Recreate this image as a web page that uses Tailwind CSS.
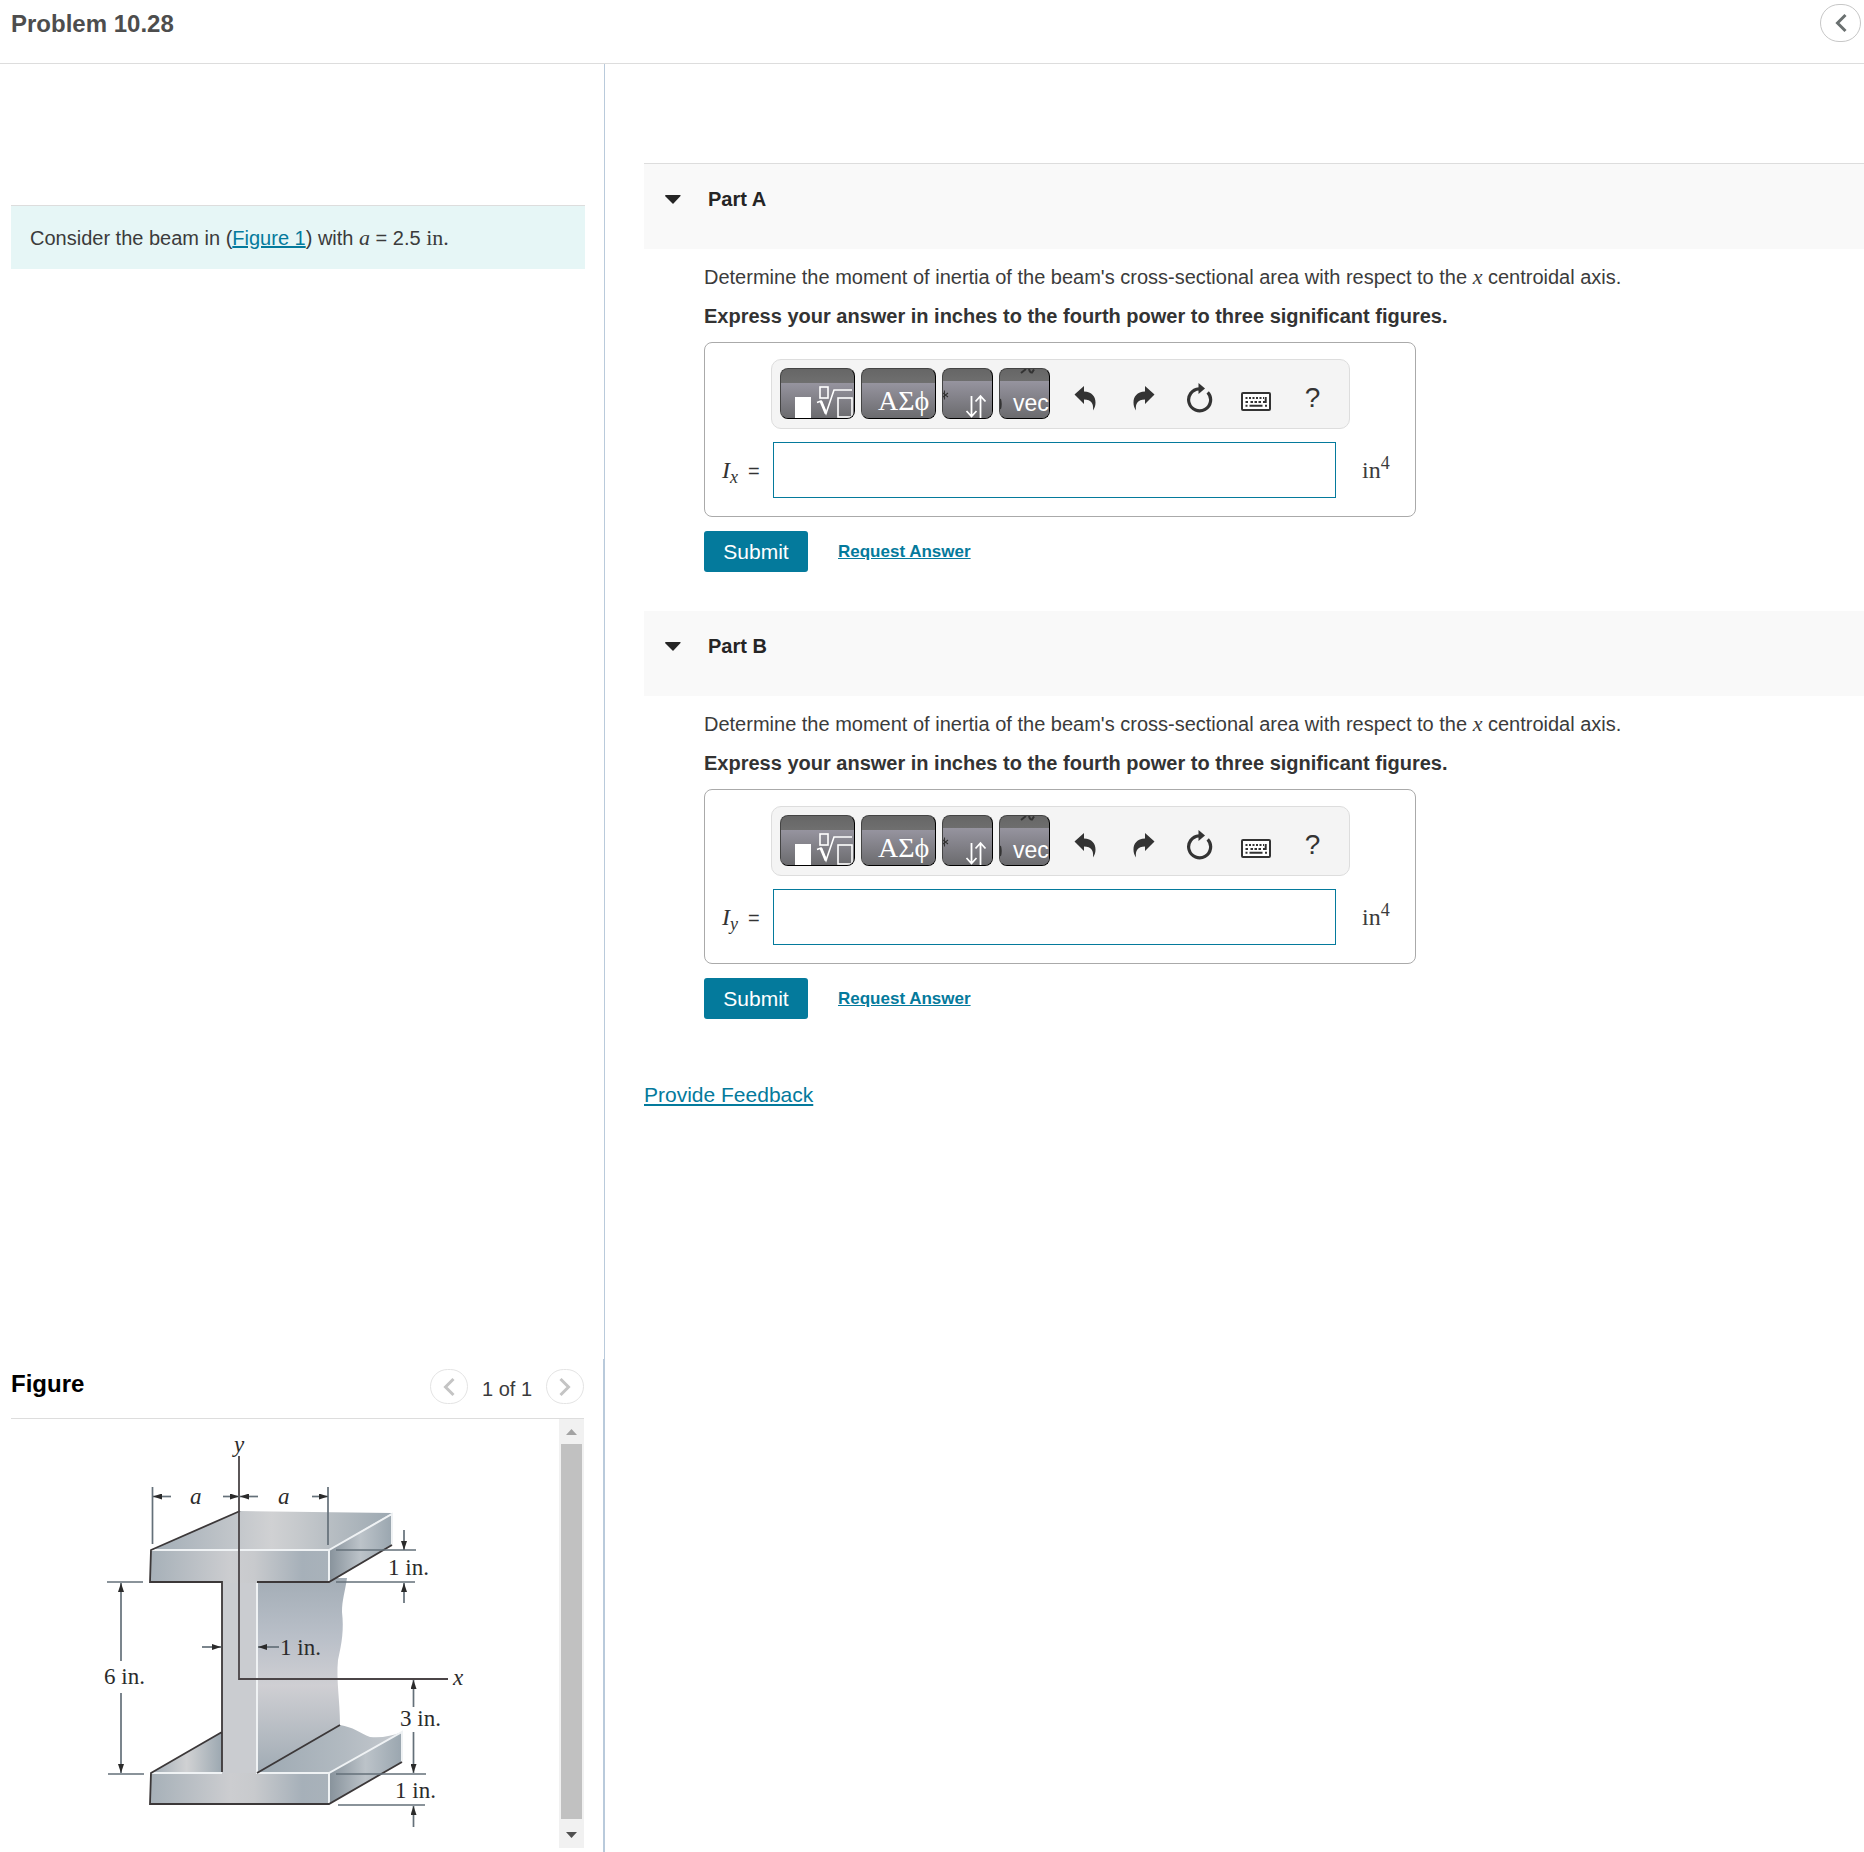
<!DOCTYPE html>
<html lang="en">
  <head>
    <meta charset="UTF-8" />
    <meta name="viewport" content="width=device-width, initial-scale=1.0" />
    <title>Problem 10.28</title>
    <script src="https://cdn.jsdelivr.net/npm/@tailwindcss/browser@4"></script>
  </head>

  <body class="bg-white text-[#3b3b3b] font-['Liberation_Sans',Arial,sans-serif]">
    <!-- Shared icons -->
    <svg class="hidden">
      <symbol id="icon-templates" viewBox="0 0 73 49">
        <rect x="14" y="28" width="16" height="21" fill="#fff" />
        <rect x="39" y="18" width="8" height="11" fill="none" stroke="#fff" stroke-width="1.6" />
        <path d="M36 33.500l4-1.500 5 12.500L53 21h18" fill="none" stroke="#fff" stroke-width="1.6" />
        <path d="M40 32.500l5 12" stroke="#fff" stroke-width="2.8" />
        <rect x="57" y="29" width="14" height="19" fill="none" stroke="#fff" stroke-width="1.6" />
      </symbol>
      <symbol id="icon-arrows" viewBox="0 0 49 49">
        <path d="M28.500 27v20M23.500 42l5 5.500 5-5.500M37.500 49V27M32.500 32.500l5-5.500 5 5.500" fill="none" stroke="#fff" stroke-width="1.8" />
        <path d="M1.500 21.500v9M0 24l5 4M0 28l5-4" stroke="#333" stroke-width="1.1" />
      </symbol>
      <symbol id="icon-undo" viewBox="0 0 24 28">
        <path d="M1.500 10.500L11 2v5.500c8 .5 11.500 5 11.500 11 0 3-.8 5.500-2.500 8 .7-7-1.500-11-9-11V20z" fill="#333" />
      </symbol>
      <symbol id="icon-reset" viewBox="0 0 28 30">
        <path d="M22.700 9.300A11 11 0 1 1 14 5.800" fill="none" stroke="#333" stroke-width="3.200" />
        <path d="M13.500 0l6.500 5.500-6.500 5.500z" fill="#333" />
      </symbol>
      <symbol id="icon-keyboard" viewBox="0 0 30 19">
        <rect x="1" y="1" width="28" height="17" rx="1" fill="#fff" stroke="#333" stroke-width="2" />
        <path d="M4.500 6H23M4.500 13.800H7M24 13.800H26" stroke="#333" stroke-width="2" stroke-dasharray="2 1.500" />
        <path d="M4.500 10h3.500M9.500 10H21" stroke="#333" stroke-width="2" stroke-dasharray="2.500 1.500" />
        <path d="M8.500 13.800H21.500M22 10h2.700V5" fill="none" stroke="#333" stroke-width="2" />
      </symbol>
      <symbol id="icon-chevron" viewBox="0 0 12 20">
        <path d="M10.500 2L2.500 10l8 8" fill="none" stroke="currentColor" stroke-width="3" />
      </symbol>
    </svg>

    <div class="min-h-screen flex flex-col">
      <!-- Header -->
      <header class="h-16 flex items-start justify-between border-b border-[#ddd] pl-[11px] pr-[3px]">
        <h1 class="mt-2.5 text-[24px] leading-7 font-bold text-[#4d4d4d]">Problem 10.28</h1>
        <button type="button" aria-label="Collapse" class="mt-1 w-[41px] h-[38px] rounded-full border border-[#c7c7c7] flex items-center justify-center text-[#6a7070]">
          <svg class="w-3 h-5"><use href="#icon-chevron" /></svg>
        </button>
      </header>

      <main class="grow flex">
        <!-- Left column -->
        <section class="w-[605px] shrink-0 flex flex-col">
          <div class="grow border-r border-[#b9cadb] pt-[141px] pl-[11px] pr-[19px]">
            <div class="border-t border-[#ddd] bg-[#e6f6f6] h-16 flex items-center pl-[19px]">
              <p class="text-[20px] leading-6">
                Consider the beam in (<a href="#figure" class="text-[#047a9c] underline">Figure 1</a>) with
                <i class="font-['Liberation_Serif',serif] text-[22px]">a</i> = 2.5
                <span class="font-['Liberation_Serif',serif] text-[22px]">in.</span>
              </p>
            </div>
          </div>

          <!-- Figure viewer -->
          <div id="figure" class="border-r-2 border-[#b9cadb] pl-[11px] pr-[19px] pb-1">
            <div class="h-[60px] flex items-start justify-between border-b border-[#ddd]">
              <h2 class="mt-[11px] text-[24px] leading-7 font-bold text-black">Figure</h2>
              <div class="mt-2.5 flex items-center">
                <button type="button" aria-label="Previous figure" class="w-[38px] h-[35px] rounded-full border border-[#e4e4e4] flex items-center justify-center text-[#c4c4c4]">
                  <svg class="w-3 h-5"><use href="#icon-chevron" /></svg>
                </button>
                <span class="w-[78px] pt-1 text-center text-[20px] leading-6">1 of 1</span>
                <button type="button" aria-label="Next figure" class="w-[38px] h-[35px] rounded-full border border-[#e4e4e4] flex items-center justify-center text-[#c4c4c4]">
                  <svg class="w-3 h-5 rotate-180"><use href="#icon-chevron" /></svg>
                </button>
              </div>
            </div>
            <div class="flex">
              <svg class="w-[548px] h-[429px]" viewBox="11 1419 548 429" font-family="Liberation Serif, serif" font-size="23" fill="#2b2b2b">
                <defs>
                  <linearGradient id="front">
                    <stop offset="0" stop-color="#a6b0b8" />
                    <stop offset=".45" stop-color="#cccdd0" />
                    <stop offset=".58" stop-color="#c8cacd" />
                    <stop offset=".85" stop-color="#a6b0b9" />
                    <stop offset="1" stop-color="#a9b2ba" />
                  </linearGradient>
                  <linearGradient id="top">
                    <stop offset="0" stop-color="#a2adb6" />
                    <stop offset=".5" stop-color="#d0d1d3" />
                    <stop offset=".6" stop-color="#c7cacd" />
                    <stop offset="1" stop-color="#9ca8b1" />
                  </linearGradient>
                  <linearGradient id="side">
                    <stop offset="0" stop-color="#87929b" />
                    <stop offset=".5" stop-color="#bcc3c9" />
                    <stop offset="1" stop-color="#9aa6af" />
                  </linearGradient>
                  <linearGradient id="web" x1="0" y1="0" x2="0" y2="1">
                    <stop offset="0" stop-color="#a3adb6" />
                    <stop offset=".3" stop-color="#b9bfc8" />
                    <stop offset=".55" stop-color="#cfcfd3" />
                    <stop offset="1" stop-color="#a0abb4" />
                  </linearGradient>
                  <linearGradient id="lower">
                    <stop offset="0" stop-color="#9da9b2" />
                    <stop offset=".6" stop-color="#b2bac1" />
                    <stop offset="1" stop-color="#c6cacf" />
                  </linearGradient>
                  <marker id="arrow" viewBox="0 0 9 6" refX="9" refY="3" markerWidth="9" markerHeight="6" markerUnits="userSpaceOnUse" orient="auto">
                    <path d="M0 0l9 3-9 3z" fill="#2b2b2b" />
                  </marker>
                </defs>

                <!-- Web side face and lower flange -->
                <path d="M257 1578H347C345 1592 342 1600 342 1612C344 1630 342 1642 338 1660C336 1680 340 1700 340 1725L257 1773z" fill="url(#web)" />
                <path d="M257 1773L340 1725C353 1727 360 1733 370 1737C382 1738 392 1736 402 1732L329 1773z" fill="url(#lower)" />
                <path d="M151 1773L222 1732V1773z" fill="url(#top)" />
                <path d="M329 1773L402 1732V1762L329 1804z" fill="url(#side)" />

                <!-- Upper flange -->
                <path d="M151 1550L240 1511L392 1513L329 1550z" fill="url(#top)" />
                <path d="M329 1550L392 1513V1545L329 1582z" fill="url(#side)" />

                <!-- Front face -->
                <path d="M151 1550H329V1582H257V1773H329V1804H150L151 1773H222V1582H150z" fill="url(#front)" />
                <path d="M222 1583H257V1773H222z" fill="#caccd0" />

                <!-- Highlights -->
                <g fill="none" stroke="#eff2f4" stroke-width="2">
                  <path d="M151 1550H329L392 1514V1545M329 1550V1582M257 1583V1773H329L402 1732V1762M329 1773V1804M151 1773H222" />
                </g>
                <!-- Dark edges -->
                <g fill="none" stroke="#3c3839" stroke-width="1.8">
                  <path d="M240 1511L151 1550L150 1582H222V1772M257 1582H329L392 1545M222 1732L151 1773L150 1804H329L402 1762M257 1773L340 1725" />
                </g>
                <!-- Axes -->
                <path d="M239 1456V1679H448" fill="none" stroke="#4b4547" stroke-width="1.8" />

                <!-- Dimension lines -->
                <g fill="none" stroke="#647079" stroke-width="1.7">
                  <path d="M152.500 1487V1544M328 1487V1545M107 1582H143M108 1774H144M336 1550H416M336 1582H415M336 1774H426M338 1805H425" />
                  <g marker-end="url(#arrow)">
                    <path d="M171 1496.500H153" />
                    <path d="M223 1496.500H239" />
                    <path d="M258 1496.500H240" />
                    <path d="M312 1496.500H328" />
                    <path d="M121 1661V1583" />
                    <path d="M121 1693V1773" />
                    <path d="M404 1530V1550" />
                    <path d="M404 1603V1583" />
                    <path d="M202 1647H221" />
                    <path d="M279 1647H258" />
                    <path d="M413.500 1707V1680" />
                    <path d="M413.500 1732V1773" />
                    <path d="M413.500 1827V1806" />
                  </g>
                </g>

                <g font-style="italic">
                  <text x="234" y="1452">y</text>
                  <text x="190" y="1504">a</text>
                  <text x="278" y="1504">a</text>
                  <text x="453" y="1685">x</text>
                </g>
                <text x="388" y="1575">1 in.</text>
                <text x="280" y="1655">1 in.</text>
                <text x="104" y="1684">6 in.</text>
                <text x="400" y="1726">3 in.</text>
                <text x="395" y="1798">1 in.</text>
              </svg>
              <!-- Scrollbar -->
              <div class="grow bg-[#f1f1f1] px-0.5 flex flex-col items-center">
                <svg class="h-[25px] w-[11px]" viewBox="0 0 11 25"><path d="M0 16l5.500-6 5.500 6z" fill="#a3a3a3" /></svg>
                <div class="grow w-full bg-[#c1c1c1]"></div>
                <svg class="h-[29px] w-[11px]" viewBox="0 0 11 29"><path d="M0 13l5.500 6 5.500-6z" fill="#505050" /></svg>
              </div>
            </div>
          </div>
        </section>

        <!-- Right column -->
        <section class="grow pt-[99px] pl-[39px]">
          <!-- Part A -->
          <div class="h-[86px] border-t border-[#ddd] bg-[#f9f9f9] flex items-start pt-[23px] pl-[21px]">
            <button type="button" aria-label="Toggle Part A" class="w-[43px] h-6 flex items-center">
              <svg class="w-4 h-[9px]" viewBox="0 0 16 9"><path d="M0 1Q0 0 1 0H15Q16 0 15.500 1L8.500 8.500Q8 9 7.500 8.500z" fill="#252525" /></svg>
            </button>
            <h2 class="text-[20px] leading-6 font-bold text-[#252525]">Part A</h2>
          </div>
          <div class="pt-4 pl-[60px] pb-[39px]">
            <p class="text-[20px] leading-6">
              Determine the moment of inertia of the beam's cross-sectional area with respect to the
              <i class="font-['Liberation_Serif',serif] text-[22px] leading-6">x</i> centroidal axis.
            </p>
            <p class="mt-[15px] text-[20px] leading-6 font-bold text-[#333]">Express your answer in inches to the fourth power to three significant figures.</p>

            <div class="mt-3.5 w-[712px] border border-[#aaa] rounded-lg pt-4 pb-[18px]">
              <div class="ml-[66px] w-[579px] h-[70px] border border-[#ddd] rounded-[10px] bg-[#f4f4f4] flex items-start gap-1.5 pt-2 pl-2">
                <button type="button" aria-label="Templates" class="w-[75px] h-[51px] rounded-lg border border-black border-t-[#444] border-l-[#444] overflow-hidden bg-linear-to-b from-[#666] to-[#707070] to-[15px]">
                  <svg class="w-[73px] h-[49px]" viewBox="0 0 73 49">
                    <rect y="14" width="73" height="35" fill="url(#key)" />
                    <use href="#icon-templates" width="73" height="49" />
                  </svg>
                </button>
                <button type="button" aria-label="Symbols" class="w-[75px] h-[51px] rounded-lg border border-black border-t-[#444] border-l-[#444] overflow-hidden bg-linear-to-b from-[#666] to-[#707070] to-[15px]">
                  <svg class="w-[73px] h-[49px]" viewBox="0 0 73 49">
                    <defs>
                      <linearGradient id="key" x1="0" y1="0" x2="0" y2="1">
                        <stop offset="0" stop-color="#96949f" />
                        <stop offset="1" stop-color="#6b6b6e" />
                      </linearGradient>
                    </defs>
                    <rect y="14" width="73" height="35" fill="url(#key)" />
                    <text x="16" y="41" font-family="Liberation Serif, serif" font-size="28" fill="#fff">ΑΣϕ</text>
                  </svg>
                </button>
                <button type="button" aria-label="Arrows" class="w-[51px] h-[51px] rounded-lg border border-black border-t-[#444] border-l-[#444] overflow-hidden bg-linear-to-b from-[#666] to-[#707070] to-[15px]">
                  <svg class="w-[49px] h-[49px]" viewBox="0 0 49 49">
                    <rect y="12" width="49" height="37" fill="url(#key)" />
                    <use href="#icon-arrows" width="49" height="49" />
                  </svg>
                </button>
                <button type="button" aria-label="Vectors" class="w-[51px] h-[51px] rounded-lg border border-black border-t-[#444] border-l-[#444] overflow-hidden bg-linear-to-b from-[#666] to-[#707070] to-[15px]">
                  <svg class="w-[49px] h-[49px]" viewBox="0 0 49 49">
                    <rect y="12" width="49" height="37" fill="url(#key)" />
                    <path d="M21 4l5-4M29 0q1 4 3 3.500l2-3M0 30q1.500 5 0 10" fill="none" stroke="#333" stroke-width="2" />
                    <text x="13" y="42" font-family="Liberation Sans, sans-serif" font-size="23" fill="#fff">vec</text>
                  </svg>
                </button>
                <div class="flex h-[51px] pt-2">
                  <button type="button" aria-label="Undo" class="w-[57px] flex items-center justify-center"><svg class="w-6 h-7"><use href="#icon-undo" /></svg></button>
                  <button type="button" aria-label="Redo" class="w-[57px] pl-1 flex items-center justify-center"><svg class="w-6 h-7 -scale-x-100"><use href="#icon-undo" /></svg></button>
                  <button type="button" aria-label="Reset" class="w-[57px] flex items-center justify-center"><svg class="w-7 h-[30px]"><use href="#icon-reset" /></svg></button>
                  <button type="button" aria-label="Keyboard shortcuts" class="w-[57px] pt-2 flex items-center justify-center"><svg class="w-[30px] h-[19px]"><use href="#icon-keyboard" /></svg></button>
                  <button type="button" aria-label="Help" class="w-[57px] text-[28px] text-[#333]">?</button>
                </div>
              </div>
              <div class="mt-[13px] h-14 pl-[17px] flex items-center">
                <label for="answer-a" class="w-[51px] flex items-baseline text-[#333]">
                  <i class="font-['Liberation_Serif',serif] text-[24px]">I<sub class="text-[18px]">x</sub></i>
                  <span class="ml-2.5 text-[20px]">=</span>
                </label>
                <input id="answer-a" type="text" class="w-[563px] h-14 border border-[#047a9c] px-2 text-[20px]" />
                <span class="ml-[26px] font-['Liberation_Serif',serif] text-[24px]">in<sup class="text-[18px]">4</sup></span>
              </div>
            </div>

            <div class="mt-3.5 flex items-center gap-[30px]">
              <button type="submit" class="w-[104px] h-[41px] rounded-[3px] bg-[#047a9c] text-white text-[21px]">Submit</button>
              <a href="#" class="text-[17px] font-bold text-[#047a9c] underline">Request Answer</a>
            </div>
          </div>

          <!-- Part B -->
          <div class="h-[85px] bg-[#f9f9f9] flex items-start pt-[23px] pl-[21px]">
            <button type="button" aria-label="Toggle Part B" class="w-[43px] h-6 flex items-center">
              <svg class="w-4 h-[9px]" viewBox="0 0 16 9"><path d="M0 1Q0 0 1 0H15Q16 0 15.500 1L8.500 8.500Q8 9 7.500 8.500z" fill="#252525" /></svg>
            </button>
            <h2 class="text-[20px] leading-6 font-bold text-[#252525]">Part B</h2>
          </div>
          <div class="pt-4 pl-[60px] pb-[64px]">
            <p class="text-[20px] leading-6">
              Determine the moment of inertia of the beam's cross-sectional area with respect to the
              <i class="font-['Liberation_Serif',serif] text-[22px] leading-6">x</i> centroidal axis.
            </p>
            <p class="mt-[15px] text-[20px] leading-6 font-bold text-[#333]">Express your answer in inches to the fourth power to three significant figures.</p>

            <div class="mt-3.5 w-[712px] border border-[#aaa] rounded-lg pt-4 pb-[18px]">
              <div class="ml-[66px] w-[579px] h-[70px] border border-[#ddd] rounded-[10px] bg-[#f4f4f4] flex items-start gap-1.5 pt-2 pl-2">
                <button type="button" aria-label="Templates" class="w-[75px] h-[51px] rounded-lg border border-black border-t-[#444] border-l-[#444] overflow-hidden bg-linear-to-b from-[#666] to-[#707070] to-[15px]">
                  <svg class="w-[73px] h-[49px]" viewBox="0 0 73 49">
                    <rect y="14" width="73" height="35" fill="url(#key)" />
                    <use href="#icon-templates" width="73" height="49" />
                  </svg>
                </button>
                <button type="button" aria-label="Symbols" class="w-[75px] h-[51px] rounded-lg border border-black border-t-[#444] border-l-[#444] overflow-hidden bg-linear-to-b from-[#666] to-[#707070] to-[15px]">
                  <svg class="w-[73px] h-[49px]" viewBox="0 0 73 49">
                    <rect y="14" width="73" height="35" fill="url(#key)" />
                    <text x="16" y="41" font-family="Liberation Serif, serif" font-size="28" fill="#fff">ΑΣϕ</text>
                  </svg>
                </button>
                <button type="button" aria-label="Arrows" class="w-[51px] h-[51px] rounded-lg border border-black border-t-[#444] border-l-[#444] overflow-hidden bg-linear-to-b from-[#666] to-[#707070] to-[15px]">
                  <svg class="w-[49px] h-[49px]" viewBox="0 0 49 49">
                    <rect y="12" width="49" height="37" fill="url(#key)" />
                    <use href="#icon-arrows" width="49" height="49" />
                  </svg>
                </button>
                <button type="button" aria-label="Vectors" class="w-[51px] h-[51px] rounded-lg border border-black border-t-[#444] border-l-[#444] overflow-hidden bg-linear-to-b from-[#666] to-[#707070] to-[15px]">
                  <svg class="w-[49px] h-[49px]" viewBox="0 0 49 49">
                    <rect y="12" width="49" height="37" fill="url(#key)" />
                    <path d="M21 4l5-4M29 0q1 4 3 3.500l2-3M0 30q1.500 5 0 10" fill="none" stroke="#333" stroke-width="2" />
                    <text x="13" y="42" font-family="Liberation Sans, sans-serif" font-size="23" fill="#fff">vec</text>
                  </svg>
                </button>
                <div class="flex h-[51px] pt-2">
                  <button type="button" aria-label="Undo" class="w-[57px] flex items-center justify-center"><svg class="w-6 h-7"><use href="#icon-undo" /></svg></button>
                  <button type="button" aria-label="Redo" class="w-[57px] pl-1 flex items-center justify-center"><svg class="w-6 h-7 -scale-x-100"><use href="#icon-undo" /></svg></button>
                  <button type="button" aria-label="Reset" class="w-[57px] flex items-center justify-center"><svg class="w-7 h-[30px]"><use href="#icon-reset" /></svg></button>
                  <button type="button" aria-label="Keyboard shortcuts" class="w-[57px] pt-2 flex items-center justify-center"><svg class="w-[30px] h-[19px]"><use href="#icon-keyboard" /></svg></button>
                  <button type="button" aria-label="Help" class="w-[57px] text-[28px] text-[#333]">?</button>
                </div>
              </div>
              <div class="mt-[13px] h-14 pl-[17px] flex items-center">
                <label for="answer-b" class="w-[51px] flex items-baseline text-[#333]">
                  <i class="font-['Liberation_Serif',serif] text-[24px]">I<sub class="text-[18px]">y</sub></i>
                  <span class="ml-2.5 text-[20px]">=</span>
                </label>
                <input id="answer-b" type="text" class="w-[563px] h-14 border border-[#047a9c] px-2 text-[20px]" />
                <span class="ml-[26px] font-['Liberation_Serif',serif] text-[24px]">in<sup class="text-[18px]">4</sup></span>
              </div>
            </div>

            <div class="mt-3.5 flex items-center gap-[30px]">
              <button type="submit" class="w-[104px] h-[41px] rounded-[3px] bg-[#047a9c] text-white text-[21px]">Submit</button>
              <a href="#" class="text-[17px] font-bold text-[#047a9c] underline">Request Answer</a>
            </div>
          </div>

          <a href="#" class="text-[21px] leading-6 text-[#047a9c] underline underline-offset-2">Provide Feedback</a>
        </section>
      </main>
    </div>
  </body>
</html>
